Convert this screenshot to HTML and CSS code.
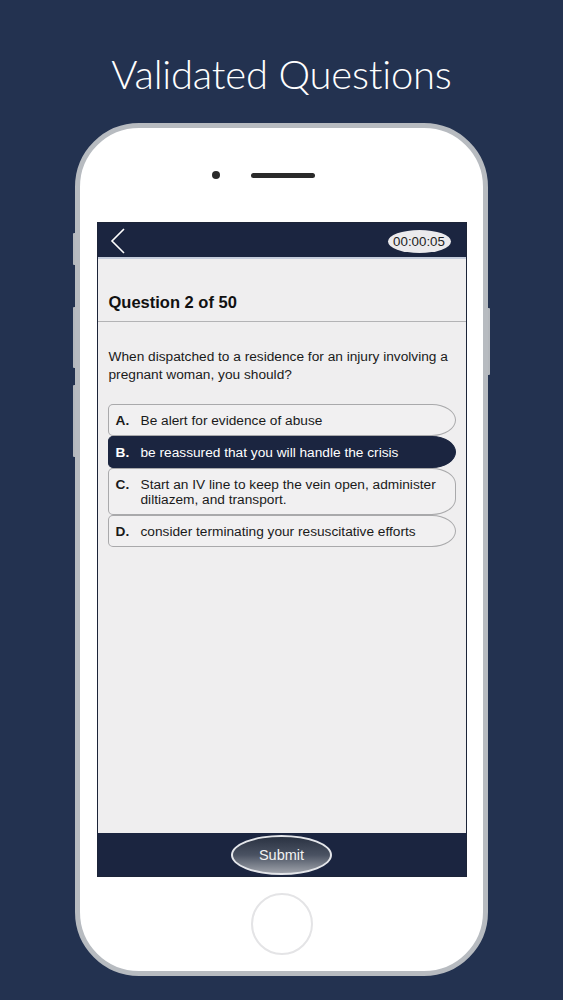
FILE: index.html
```html
<!DOCTYPE html>
<html>
<head>
<meta charset="utf-8">
<link rel="stylesheet" href="styles.css">
</head>
<body>
<h1 class="title">Validated Questions</h1>
<div class="phone">
  <span class="side-btn left b1"></span>
  <span class="side-btn left b2"></span>
  <span class="side-btn left b3"></span>
  <span class="side-btn right b4"></span>
  <div class="phone-top">
    <span class="camera"></span>
    <span class="speaker"></span>
  </div>
  <div class="screen">
    <div class="navbar">
      <svg class="back" width="16" height="26" viewBox="0 0 16 26"><polyline points="14,1 2,13 14,25" fill="none" stroke="#fff" stroke-width="1.6"/></svg>
      <div class="timer">00:00:05</div>
    </div>
    <div class="content">
      <div class="q-header">Question 2 of 50</div>
      <p class="q-text">When dispatched to a residence for an injury involving a pregnant woman, you should?</p>
      <div class="options">
        <div class="option"><span class="letter">A.</span><span class="otext">Be alert for evidence of abuse</span></div>
        <div class="option selected"><span class="letter">B.</span><span class="otext">be reassured that you will handle the crisis</span></div>
        <div class="option"><span class="letter">C.</span><span class="otext">Start an IV line to keep the vein open, administer diltiazem, and transport.</span></div>
        <div class="option"><span class="letter">D.</span><span class="otext">consider terminating your resuscitative efforts</span></div>
      </div>
    </div>
    <div class="bottombar">
      <div class="submit">Submit</div>
    </div>
  </div>
  <div class="phone-bottom">
    <span class="home"></span>
  </div>
</div>
</body>
</html>
```
FILE: styles.css
```css
html, body {
  margin: 0;
  padding: 0;
  background: #233250;
  height: 1000px;
  overflow: hidden;
}
body {
  font-family: "Liberation Sans", Arial, sans-serif;
}
.title {
  margin: 0;
  padding-top: 50px;
  height: 73px;
  text-align: center;
  color: #ffffff;
  font-family: Lato, "Open Sans", sans-serif;
  font-weight: 300;
  font-size: 40px;
  line-height: 48px;
  letter-spacing: -0.2px;
}
.phone {
  position: relative;
  box-sizing: border-box;
  width: 413px;
  height: 853px;
  margin: 0 auto;
  border: 5px solid #b7bbc0;
  border-radius: 64px;
  background: #ffffff;
  display: flex;
  flex-direction: column;
  align-items: center;
}
.side-btn {
  position: absolute;
  width: 2px;
  background: #b3b7bc;
}
.side-btn.left { left: -7px; border-radius: 1px 0 0 1px; }
.side-btn.right { right: -7px; border-radius: 0 1px 1px 0; }
.b1 { top: 105px; height: 32px; }
.b2 { top: 179px; height: 61px; }
.b3 { top: 257px; height: 72px; }
.b4 { top: 180px; height: 67px; }
.phone-top {
  height: 94px;
  display: flex;
  align-items: center;
  justify-content: center;
  gap: 31px;
  padding-right: 36px;
  box-sizing: border-box;
}
.camera {
  width: 8px;
  height: 8px;
  border-radius: 50%;
  background: #2a2a2a;
}
.speaker {
  width: 64px;
  height: 5px;
  border-radius: 3px;
  background: #2a2a2a;
}
.screen {
  box-sizing: border-box;
  width: 370px;
  height: 655px;
  border: 1px solid #1c2438;
  background: #efeeef;
  display: flex;
  flex-direction: column;
}
.navbar {
  height: 34px;
  background: #1b2540;
  border-bottom: 2px solid #c5cddc;
  display: flex;
  align-items: center;
  justify-content: space-between;
  padding: 0 15px 0 12px;
  flex-shrink: 0;
}
.back { display: block; margin-top: 1px; }
.timer {
  width: 63px;
  height: 23px;
  border-radius: 50%;
  background: #ebeaed;
  color: #222;
  font-size: 13.3px;
  line-height: 23px;
  text-align: center;
  margin-top: 2px;
}
.content {
  flex: 1;
  background: #efeeef;
}
.q-header {
  height: 63px;
  box-sizing: border-box;
  padding: 34px 0 0 11px;
  font-size: 16.5px;
  font-weight: bold;
  color: #111;
  border-bottom: 1px solid #b3b3b5;
  line-height: 18px;
}
.q-text {
  margin: 26px 12px 0 11px;
  font-size: 13.7px;
  line-height: 17.5px;
  color: #1a1a1a;
}
.options {
  margin: 21px 10px 0 10px;
  display: flex;
  flex-direction: column;
}
.option {
  display: flex;
  align-items: center;
  min-height: 32px;
  box-sizing: border-box;
  padding: 7.5px 12px 7.5px 7px;
  border: 1px solid #a9a9ab;
  border-radius: 5px 24px 24px 5px / 5px 16px 16px 5px;
  background: #f1f0f1;
  font-size: 13.7px;
  line-height: 15px;
  color: #1a1a1a;
}
.option + .option { margin-top: 0; }
.option.selected {
  background: #1b2540;
  border-color: #1b2540;
  color: #ffffff;
}
.letter {
  font-weight: bold;
  width: 25px;
  flex-shrink: 0;
  align-self: flex-start;
}
.bottombar {
  height: 43px;
  background: #1b2540;
  display: flex;
  justify-content: center;
  align-items: center;
  flex-shrink: 0;
}
.submit {
  box-sizing: border-box;
  width: 101px;
  height: 40px;
  border: 2px solid #e4e6ea;
  border-radius: 50%;
  background: linear-gradient(to bottom, #2a3242 0%, #4a5262 50%, #9ea2aa 100%);
  color: #f2f2f2;
  font-size: 14.5px;
  line-height: 36px;
  text-align: center;
}
.phone-bottom {
  flex: 1;
  display: flex;
  align-items: center;
  justify-content: center;
}
.home {
  width: 62px;
  height: 62px;
  box-sizing: border-box;
  border-radius: 50%;
  border: 2px solid #e4e4e6;
}
```
